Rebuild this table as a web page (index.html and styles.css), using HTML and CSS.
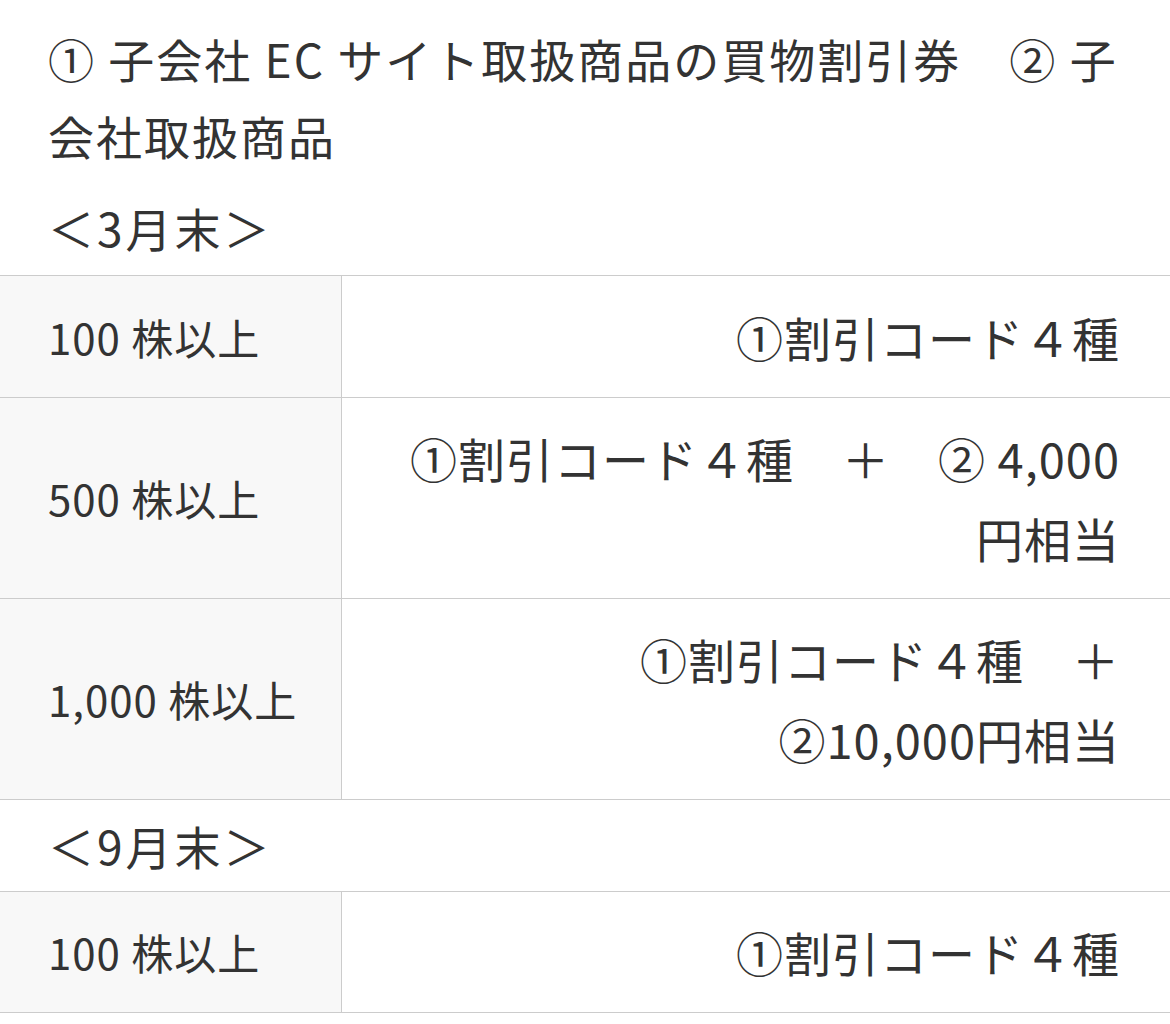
FILE: index.html
```html
<!DOCTYPE html>
<html lang="ja">
<head>
<meta charset="utf-8">
<title>株主優待</title>
<link rel="stylesheet" href="styles.css">
</head>
<body>
<div class="benefit">
  <p class="benefit-title">① 子会社 EC サイト取扱商品の買物割引券　② 子会社取扱商品</p>
  <p class="period">＜3月末＞</p>
  <table class="benefit-table">
    <colgroup><col class="col-shares"><col class="col-detail"></colgroup>
    <tbody>
      <tr>
        <th class="shares">100 株以上</th>
        <td class="detail">①割引コード４種</td>
      </tr>
      <tr>
        <th class="shares">500 株以上</th>
        <td class="detail">①割引コード４種　＋　<span class="nw">② 4,000</span><wbr>円相当</td>
      </tr>
      <tr>
        <th class="shares">1,000 株以上</th>
        <td class="detail">①割引コード４種　＋　<span class="nw">②10,000円相当</span></td>
      </tr>
      <tr>
        <td class="period-row" colspan="2">＜9月末＞</td>
      </tr>
      <tr>
        <th class="shares">100 株以上</th>
        <td class="detail">①割引コード４種</td>
      </tr>
    </tbody>
  </table>
</div>
</body>
</html>
```

FILE: styles.css
```css
html, body {
  margin: 0;
  padding: 0;
  background: #ffffff;
}

body {
  font-family: "Noto Sans CJK JP", "Noto Sans", sans-serif;
  color: #333333;
}

.benefit {
  width: 1170px;
}

.benefit-title {
  margin: 0;
  padding: 20px 48px 0 48px;
  font-size: 46px;
  line-height: 77px;
  letter-spacing: 2px;
}

.period {
  margin: 0;
  padding: 15px 48px 9px 48px;
  font-size: 46px;
  line-height: 77px;
  letter-spacing: 3px;
}

.benefit-table {
  width: 100%;
  border-collapse: collapse;
  table-layout: fixed;
}

.col-shares {
  width: 341px;
}

.benefit-table tr {
  border-top: 1px solid #cccccc;
  border-bottom: 1px solid #cccccc;
}

.shares {
  background: #f8f8f8;
  border-right: 1px solid #cccccc;
  text-align: left;
  font-weight: normal;
  font-size: 42px;
  line-height: 79.5px;
  letter-spacing: 1px;
  padding: 20px 20px 20px 48px;
  vertical-align: middle;
}

.detail {
  text-align: right;
  font-size: 47px;
  line-height: 79.5px;
  letter-spacing: 1px;
  padding: 20.5px 50px 20.5px 48px;
  vertical-align: middle;
}

.nw {
  white-space: nowrap;
}

.period-row {
  font-size: 46px;
  line-height: 77px;
  letter-spacing: 3px;
  padding: 7px 48px;
  background: #ffffff;
}
```
